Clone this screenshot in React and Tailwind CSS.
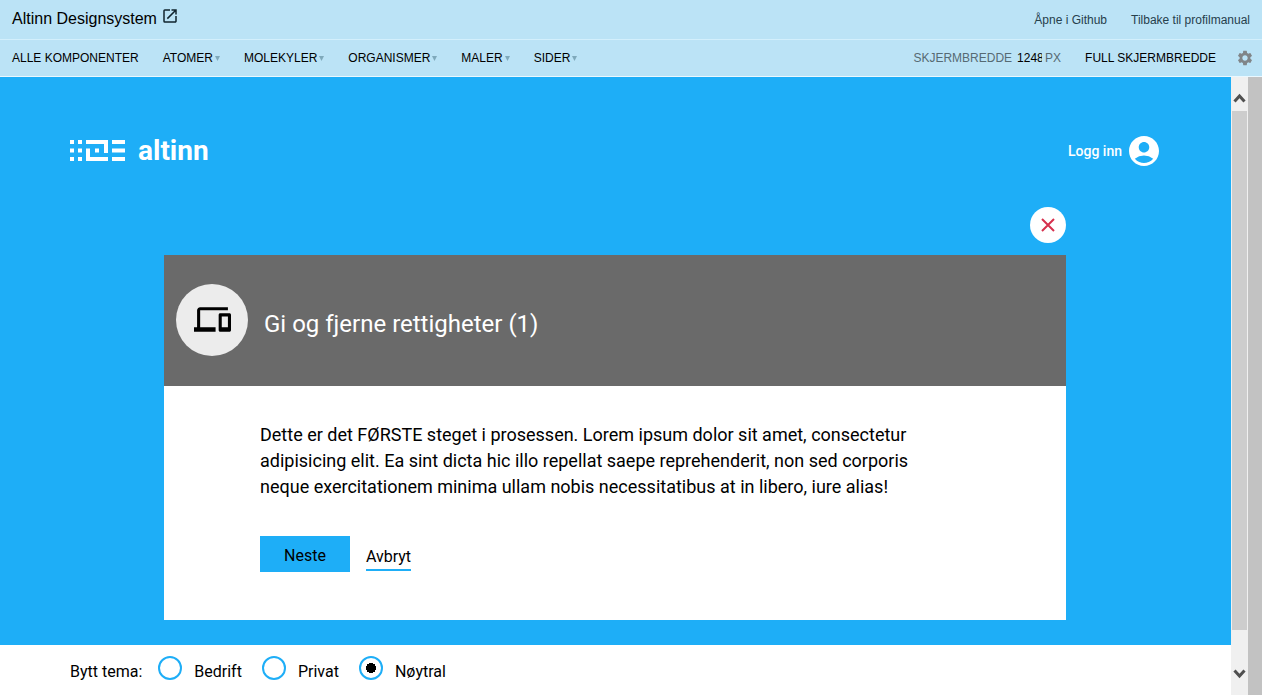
import { MdOutlineOpenInNew, MdSettings, MdAccountCircle, MdDevices } from "react-icons/md";

const menus = ["Atomer", "Molekyler", "Organismer", "Maler", "Sider"];
const themes = ["Bedrift", "Privat", "Nøytral"];

function Toolbar() {
  return (
    <header className="bg-[#bbe3f6] font-['Liberation_Sans',Arial,sans-serif] text-xs text-black">
      <div className="flex h-10 items-center border-b border-[#d3effc] px-3">
        <a href="#system" className="flex gap-1 pb-0.5 text-base leading-5">
          Altinn Designsystem
          <MdOutlineOpenInNew className="-mt-0.5 size-[18px] text-[#10242e]" />
        </a>
        <nav className="ml-auto flex gap-6 text-[#26404c]">
          <a href="#github">Åpne i Github</a>
          <a href="#profil">Tilbake til profilmanual</a>
        </nav>
      </div>
      <div className="flex h-[37px] items-center border-b border-[#eaf8ff] px-3 uppercase">
        <nav className="flex gap-6">
          <a href="#alle">Alle komponenter</a>
          {menus.map((m) => (
            <button key={m} type="button" className="flex items-center gap-[2px] uppercase">
              {m}
              <svg viewBox="0 0 5 5" className="size-[5px] fill-[#7fa9bb]" aria-hidden="true">
                <path d="M0 0h5L2.500 5z" />
              </svg>
            </button>
          ))}
        </nav>
        <label className="ml-auto flex items-center text-[#566a73]">
          Skjermbredde
          <input defaultValue="1248" className="mr-[3px] ml-[5px] w-[25px] bg-transparent text-black outline-none" />
          px
        </label>
        <button type="button" className="ml-6 uppercase">Full skjermbredde</button>
        <button type="button" aria-label="Innstillinger" className="-mr-1 ml-5">
          <MdSettings className="size-[18px] text-[#808588]" />
        </button>
      </div>
    </header>
  );
}

function Logo() {
  return (
    <a href="#hjem" aria-label="Altinn" className="flex items-center gap-3 text-white">
      <svg viewBox="0 0 56 22" className="h-[22px] w-14 fill-current" aria-hidden="true">
        <path d="M0 0h4v4H0zM8 0h4v4H8zM0 8.500h4v4H0zM8 8.500h4v4H8zM0 17h4v4H0zM8 17h4v4H8z" />
        <path d="M16 0h22v13h-4V4H16zM16 8.500h4V17h18v4H16zM25 8.500h4v4h-4z" />
        <path d="M42 0h13v4H42zM42 8.500h13v4H42zM42 17h13v4H42z" />
      </svg>
      <span className="text-[28px] leading-8 font-bold">altinn</span>
    </a>
  );
}

function Modal() {
  return (
    <section className="mr-24 ml-[94px]">
      <div className="flex justify-end">
        <button type="button" aria-label="Lukk" className="flex size-9 items-center justify-center rounded-full bg-white">
          <svg viewBox="0 0 14 14" className="size-[14px] fill-none stroke-[#d6304d] stroke-2" aria-hidden="true">
            <path d="M1 1l12 12M13 1L1 13" />
          </svg>
        </button>
      </div>
      <div className="mt-3 bg-white">
        <div className="flex h-[131px] items-center gap-4 bg-[#6a6a6a] px-3 pb-0.5">
          <span className="flex size-[72px] items-center justify-center rounded-full bg-[#ececec]">
            <MdDevices className="size-[37px] text-black" />
          </span>
          <h1 className="pt-2 text-2xl text-white">Gi og fjerne rettigheter (1)</h1>
        </div>
        <div className="px-24 pt-9 pb-12">
          <p className="max-w-[680px] text-lg leading-[26px]">
            Dette er det FØRSTE steget i prosessen. Lorem ipsum dolor sit amet, consectetur adipisicing
            elit. Ea sint dicta hic illo repellat saepe reprehenderit, non sed corporis neque
            exercitationem minima ullam nobis necessitatibus at in libero, iure alias!
          </p>
          <div className="mt-9 flex gap-4">
            <button type="button" className="h-9 bg-[#1eaef7] px-6 pt-1">Neste</button>
            <button type="button" className="h-[35px] border-b-2 border-[#1eaef7] pt-2">Avbryt</button>
          </div>
        </div>
      </div>
    </section>
  );
}

function ThemePicker() {
  return (
    <div
      role="radiogroup"
      aria-labelledby="tema-label"
      className="flex flex-1 items-start bg-white px-[70px] pt-[11px]"
    >
      <span id="tema-label" className="mr-4 pt-1 leading-6">Bytt tema:</span>
      {themes.map((t) => (
        <label key={t} className="mr-5 flex gap-3">
          <input
            type="radio"
            name="tema"
            defaultChecked={t === "Nøytral"}
            className="size-6 appearance-none rounded-full border-2 border-[#1eaef7] bg-white checked:bg-[radial-gradient(circle,#000_5px,#fff_5px)]"
          />
          <span className="pt-1 leading-6">{t}</span>
        </label>
      ))}
    </div>
  );
}

function Scrollbar() {
  return (
    <div className="flex w-[17px] flex-col items-center bg-[#f0f0f0]" aria-hidden="true">
      <svg viewBox="0 0 17 34" className="h-[34px] w-full fill-none stroke-[#505050] stroke-[3]">
        <path d="M3.500 24.500l5-5.500 5 5.500" />
      </svg>
      <div className="w-[15px] flex-1 bg-[#cdcdcd]" />
      <svg viewBox="0 0 17 65" className="h-[65px] w-full fill-none stroke-[#505050] stroke-[3]">
        <path d="M3.500 40.500l5 5.500 5-5.500" />
      </svg>
    </div>
  );
}

export default function App() {
  return (
    <div className="flex min-h-screen flex-col">
      <Toolbar />
      <div className="flex flex-1 bg-[#c2c2c2] pr-[14px]">
        <main className="flex flex-1 flex-col font-[Roboto,sans-serif] text-base text-black">
          <div className="bg-[#1eaef7] pt-14 pr-[69px] pb-[25px] pl-[70px]">
            <div className="mb-[38px] flex items-center justify-between">
              <Logo />
              <a href="#logg-inn" className="flex items-center gap-1 text-sm font-medium text-white">
                Logg inn
                <MdAccountCircle className="size-9" />
              </a>
            </div>
            <Modal />
          </div>
          <ThemePicker />
        </main>
        <Scrollbar />
      </div>
    </div>
  );
}
